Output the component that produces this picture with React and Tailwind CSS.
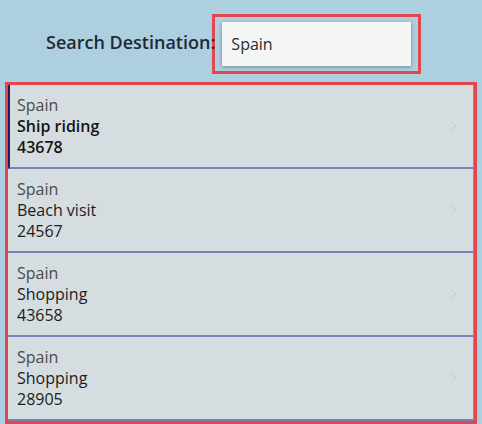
import { ChevronRight } from 'lucide-react'

const trips = [
  { country: 'Spain', title: 'Ship riding', code: '43678' },
  { country: 'Spain', title: 'Beach visit', code: '24567' },
  { country: 'Spain', title: 'Shopping', code: '43658' },
  { country: 'Spain', title: 'Shopping', code: '28905' },
]

export default function App() {
  return (
    <div
      className="h-[424px] w-[482px] overflow-hidden bg-[#aecfdf]"
      style={{ fontFamily: '"Open Sans", "Noto Sans", sans-serif' }}
    >
      {/* search bar */}
      <div className="flex h-[82px] items-start pl-[46px] pt-[14px]">
        <label className="relative z-10 mt-[16px] whitespace-nowrap text-[18px] font-semibold leading-6 text-[#1e2a36]">
          Search Destination:
        </label>
        <div className="-ml-[3px] border-[3px] border-[#e2474f] px-[7px] py-[5px]">
          <div className="flex h-[44px] w-[189px] items-center bg-[#f4f5f5] pl-[9px] text-[16px] text-[#2b2b2b] shadow-[0_1px_4px_rgba(0,0,0,0.35)]">
            Spain
          </div>
        </div>
      </div>

      {/* results */}
      <div className="mx-[5px] h-[342px] border-[3px] border-[#e2474f] shadow-[inset_0_1px_2px_rgba(0,0,0,0.15)]">
        {trips.map((t, i) => {
          const selected = i === 0
          return (
            <div
              key={i}
              className={`flex h-[84px] items-center border-b-2 border-r border-b-[#7680b5] border-r-[#8a8fb0] bg-[#d5dde1] pr-[12px] ${
                selected ? 'border-l-2 border-l-[#1c1f5a] pl-[7px]' : 'pl-[9px]'
              }`}
            >
              <div className="flex-1 text-[16px] leading-[21px]">
                <div className="text-[#4a4a4a]">{t.country}</div>
                <div className={selected ? 'font-semibold text-[#151515]' : 'text-[#1c1c1c]'}>
                  {t.title}
                </div>
                <div className={selected ? 'font-semibold text-[#151515]' : 'text-[#1c1c1c]'}>
                  {t.code}
                </div>
              </div>
              <ChevronRight size={14} strokeWidth={1.5} className="text-[#b9bfc3]" />
            </div>
          )
        })}
      </div>
    </div>
  )
}
